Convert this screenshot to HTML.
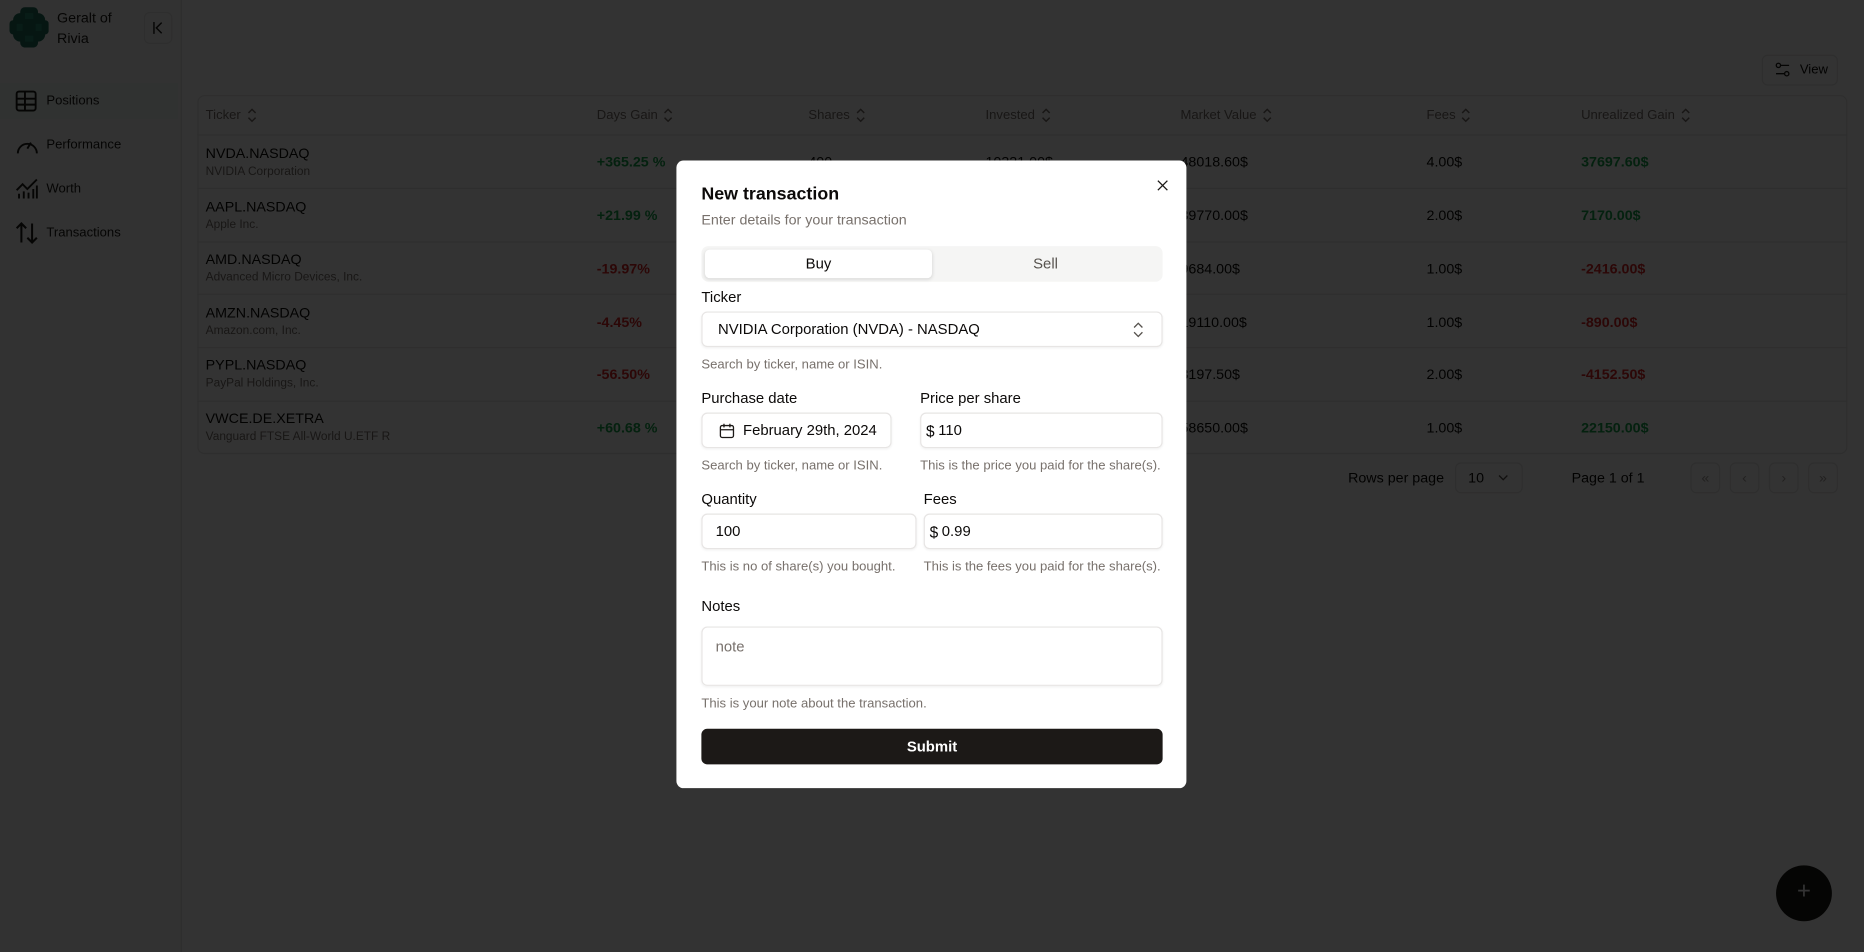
<!DOCTYPE html>
<html><head><meta charset="utf-8"><style>
*{box-sizing:border-box;margin:0;padding:0}
html,body{width:1864px;height:952px;overflow:hidden;background:#fff;font-family:"Liberation Sans",sans-serif}
#root{position:absolute;left:0;top:0;width:1568px;height:801px;transform:scale(1.18878);transform-origin:0 0;background:#fff;color:#0c0a09}
.abs{position:absolute}
.side{left:0;top:0;width:153px;height:801px;border-right:1px solid #e7e5e4;background:#fafaf9}
.nav{position:absolute;left:0;width:150px;height:30px;display:flex;align-items:center;font-size:11px;color:#1c1917}
.nav svg{position:absolute;left:13px}
.nav span{position:absolute;left:39px;top:9px}
.tbl{left:166px;top:80px;width:1388px;height:302px;border:1px solid #e7e5e4;border-radius:6px}
.th{position:absolute;top:91px;font-size:11px;color:#78716c}
.th svg{vertical-align:middle;margin-left:5px}
.row{position:absolute;left:166px;width:1388px;height:45px;border-top:1px solid #e7e5e4}
.c{position:absolute;font-size:12px;line-height:14px}
.sub{font-size:10px;color:#78716c;margin-top:2px}
.g{color:#16a34a;font-weight:bold}
.r{color:#dc2626;font-weight:bold}
.ov{left:0;top:0;width:1568px;height:801px;background:rgba(0,0,0,.8)}
.modal{left:569px;top:135px;width:429px;height:528px;background:#fff;border-radius:6px}
.lbl{position:absolute;font-size:12.5px;font-weight:500;color:#0c0a09}
.help{position:absolute;font-size:11px;color:#78716c}
.inp{position:absolute;height:30px;border:1px solid #e7e5e4;border-radius:5px;font-size:12.5px;display:flex;align-items:center;box-shadow:0 1px 2px rgba(0,0,0,.05)}
.pb{position:absolute;top:389px;width:25px;height:26px;border:1px solid #e7e5e4;border-radius:5px;font-size:12px;color:#a8a29e;text-align:center;line-height:24px}
</style></head><body><div id="root">
<div class="abs side"></div>
<svg class="abs" style="left:8px;top:6px" width="33" height="34" viewBox="0 0 33 34"><g fill="#1f6f5c"><rect x="9" y="0" width="15" height="34" rx="4"/><rect x="3" y="5" width="27" height="24" rx="6"/><rect x="0" y="11" width="33" height="12" rx="3"/></g><g fill="#2a8a73"><rect x="13" y="5" width="7" height="5"/><rect x="6" y="14" width="5" height="6"/><rect x="22" y="14" width="5" height="6"/><rect x="13" y="24" width="7" height="5"/></g></svg>
<div class="abs" style="left:48px;top:7px;font-size:12px;line-height:17px;color:#1c1917">Geralt of<br>Rivia</div>
<div class="abs" style="left:121px;top:10px;width:24px;height:27px;border:1px solid #e7e5e4;border-radius:5px"></div>
<svg class="abs" style="left:128px;top:18px" width="10" height="11" viewBox="0 0 10 11" fill="none" stroke="#1c1917" stroke-width="1.2"><path d="M1.5 0.5v10M8 1L3.5 5.5 8 10"/></svg>
<div class="nav" style="top:70px;background:#f0f7f3"><svg width="18" height="18" viewBox="0 0 18 18" fill="none" stroke="#1c1917" stroke-width="1.6"><rect x="1" y="1" width="16" height="16" rx="2"/><path d="M1 7h16M1 12h16M8 1v16"/></svg><span>Positions</span></div>
<div class="nav" style="top:107px"><svg width="20" height="18" viewBox="0 0 20 18" fill="none" stroke="#1c1917" stroke-width="1.6"><path d="M2 16A8 8 0 1 1 18 16"/><path d="M10 12l3-5"/></svg><span>Performance</span></div>
<div class="nav" style="top:144px"><svg width="20" height="18" viewBox="0 0 20 18" fill="none" stroke="#1c1917" stroke-width="1.6"><path d="M1 10l5-5 4 4 8-8"/><path d="M3 17v-4M7 17v-6M11 17v-5M15 17v-8M18 17v-11"/></svg><span>Worth</span></div>
<div class="nav" style="top:181px"><svg width="20" height="20" viewBox="0 0 20 20" fill="none" stroke="#1c1917" stroke-width="1.7"><path d="M5 18V2M1 6l4-4 4 4M14 2v16M10 14l4 4 4-4"/></svg><span>Transactions</span></div>
<div class="abs" style="left:1482px;top:46px;width:64px;height:26px;border:1px solid #e7e5e4;border-radius:5px;font-size:11px;line-height:24px;padding-left:31px">View</div>
<svg class="abs" style="left:1493px;top:52px" width="13" height="13" viewBox="0 0 13 13" fill="none" stroke="#1c1917" stroke-width="1.1"><circle cx="3" cy="3" r="1.8"/><path d="M5 3h7"/><circle cx="10" cy="10" r="1.8"/><path d="M1 10h7"/></svg>
<div class="abs tbl"></div>
<div class="th" style="left:173px">Ticker<svg width="8" height="12" viewBox="0 0 8 12" fill="none" stroke="#78716c" stroke-width="1.2"><path d="M1 4l3-3 3 3M1 8l3 3 3-3"/></svg></div>
<div class="th" style="left:502px">Days Gain<svg width="8" height="12" viewBox="0 0 8 12" fill="none" stroke="#78716c" stroke-width="1.2"><path d="M1 4l3-3 3 3M1 8l3 3 3-3"/></svg></div>
<div class="th" style="left:680px">Shares<svg width="8" height="12" viewBox="0 0 8 12" fill="none" stroke="#78716c" stroke-width="1.2"><path d="M1 4l3-3 3 3M1 8l3 3 3-3"/></svg></div>
<div class="th" style="left:829px">Invested<svg width="8" height="12" viewBox="0 0 8 12" fill="none" stroke="#78716c" stroke-width="1.2"><path d="M1 4l3-3 3 3M1 8l3 3 3-3"/></svg></div>
<div class="th" style="left:993px">Market Value<svg width="8" height="12" viewBox="0 0 8 12" fill="none" stroke="#78716c" stroke-width="1.2"><path d="M1 4l3-3 3 3M1 8l3 3 3-3"/></svg></div>
<div class="th" style="left:1200px">Fees<svg width="8" height="12" viewBox="0 0 8 12" fill="none" stroke="#78716c" stroke-width="1.2"><path d="M1 4l3-3 3 3M1 8l3 3 3-3"/></svg></div>
<div class="th" style="left:1330px">Unrealized Gain<svg width="8" height="12" viewBox="0 0 8 12" fill="none" stroke="#78716c" stroke-width="1.2"><path d="M1 4l3-3 3 3M1 8l3 3 3-3"/></svg></div>

<div class="row" style="top:113px"></div><div class="row" style="top:158px"></div><div class="row" style="top:203px"></div><div class="row" style="top:247px"></div><div class="row" style="top:292px"></div><div class="row" style="top:337px"></div>

<div class="c" style="left:173px;top:122px">NVDA.NASDAQ<div class="sub">NVIDIA Corporation</div></div>
<div class="c g" style="left:502px;top:129px">+365.25 %</div><div class="c" style="left:680px;top:129px">400</div><div class="c" style="left:829px;top:129px">10321.00$</div><div class="c" style="left:993px;top:129px">48018.60$</div><div class="c" style="left:1200px;top:129px">4.00$</div><div class="c g" style="left:1330px;top:129px">37697.60$</div>
<div class="c" style="left:173px;top:167px">AAPL.NASDAQ<div class="sub">Apple Inc.</div></div>
<div class="c g" style="left:502px;top:174px">+21.99 %</div><div class="c" style="left:993px;top:174px">39770.00$</div><div class="c" style="left:1200px;top:174px">2.00$</div><div class="c g" style="left:1330px;top:174px">7170.00$</div>
<div class="c" style="left:173px;top:211px">AMD.NASDAQ<div class="sub">Advanced Micro Devices, Inc.</div></div>
<div class="c r" style="left:502px;top:219px">-19.97%</div><div class="c" style="left:993px;top:219px">9684.00$</div><div class="c" style="left:1200px;top:219px">1.00$</div><div class="c r" style="left:1330px;top:219px">-2416.00$</div>
<div class="c" style="left:173px;top:256px">AMZN.NASDAQ<div class="sub">Amazon.com, Inc.</div></div>
<div class="c r" style="left:502px;top:264px">-4.45%</div><div class="c" style="left:993px;top:264px">19110.00$</div><div class="c" style="left:1200px;top:264px">1.00$</div><div class="c r" style="left:1330px;top:264px">-890.00$</div>
<div class="c" style="left:173px;top:300px">PYPL.NASDAQ<div class="sub">PayPal Holdings, Inc.</div></div>
<div class="c r" style="left:502px;top:308px">-56.50%</div><div class="c" style="left:993px;top:308px">3197.50$</div><div class="c" style="left:1200px;top:308px">2.00$</div><div class="c r" style="left:1330px;top:308px">-4152.50$</div>
<div class="c" style="left:173px;top:345px">VWCE.DE.XETRA<div class="sub">Vanguard FTSE All-World U.ETF R</div></div>
<div class="c g" style="left:502px;top:353px">+60.68 %</div><div class="c" style="left:993px;top:353px">58650.00$</div><div class="c" style="left:1200px;top:353px">1.00$</div><div class="c g" style="left:1330px;top:353px">22150.00$</div>

<div class="c" style="left:1134px;top:395px">Rows per page</div>
<div class="abs" style="left:1224px;top:389px;width:57px;height:26px;border:1px solid #e7e5e4;border-radius:5px;font-size:12px;line-height:24px;padding-left:10px">10</div>
<svg class="abs" style="left:1260px;top:399px" width="9" height="6" viewBox="0 0 9 6" fill="none" stroke="#57534e" stroke-width="1.1"><path d="M1 1l3.5 3.5L8 1"/></svg>
<div class="c" style="left:1322px;top:395px">Page 1 of 1</div>
<div class="pb" style="left:1422px">«</div><div class="pb" style="left:1455px">‹</div><div class="pb" style="left:1488px">›</div><div class="pb" style="left:1521px">»</div>
<div class="abs" style="left:1494px;top:728px;width:47px;height:47px;border-radius:50%;background:#1c1917;color:#fff;font-size:20px;text-align:center;line-height:45px">+</div>

<div class="abs ov"></div>

<div class="abs modal">
<svg class="abs" style="left:404px;top:16px" width="10" height="10" viewBox="0 0 10 10" stroke="#1c1917" stroke-width="1.1"><path d="M1 1l8 8M9 1l-8 8"/></svg>
<div class="abs" style="left:21px;top:20px;font-size:15px;font-weight:bold">New transaction</div>
<div class="abs" style="left:21px;top:43px;font-size:12px;color:#78716c">Enter details for your transaction</div>
<div class="abs" style="left:21px;top:72px;width:388px;height:30px;background:#f5f5f4;border-radius:6px"></div>
<div class="abs" style="left:24px;top:75px;width:191px;height:24px;background:#fff;border-radius:4px;box-shadow:0 1px 3px rgba(0,0,0,.12);font-size:12.5px;text-align:center;line-height:24px;font-weight:500">Buy</div>
<div class="abs" style="left:215px;top:75px;width:191px;height:24px;font-size:12.5px;text-align:center;line-height:24px;color:#57534e">Sell</div>
<div class="lbl" style="left:21px;top:108px">Ticker</div>
<div class="inp" style="left:21px;top:127px;width:388px;padding-left:13px;font-weight:500">NVIDIA Corporation (NVDA) - NASDAQ
<svg class="abs" style="left:362px;top:8px" width="9" height="13" viewBox="0 0 9 13" fill="none" stroke="#57534e" stroke-width="1.1"><path d="M1 4.5l3.5-3.5 3.5 3.5M1 8.5l3.5 3.5 3.5-3.5"/></svg></div>
<div class="help" style="left:21px;top:166px">Search by ticker, name or ISIN.</div>
<div class="lbl" style="left:21px;top:193px">Purchase date</div>
<div class="inp" style="left:21px;top:212px;width:160px;padding-left:34px;font-weight:500">February 29th, 2024
<svg class="abs" style="left:14px;top:8px" width="13" height="13" viewBox="0 0 13 13" fill="none" stroke="#1c1917" stroke-width="1.1"><rect x="1" y="2" width="11" height="10" rx="1.5"/><path d="M1 5.5h11M4 0.5v3M9 0.5v3"/></svg></div>
<div class="lbl" style="left:205px;top:193px">Price per share</div>
<div class="inp" style="left:205px;top:212px;width:204px;padding-left:4px"><b style="font-weight:500;font-size:13px;margin-right:3px">$</b>110</div>
<div class="help" style="left:21px;top:251px">Search by ticker, name or ISIN.</div>
<div class="help" style="left:205px;top:251px">This is the price you paid for the share(s).</div>
<div class="lbl" style="left:21px;top:278px">Quantity</div>
<div class="inp" style="left:21px;top:297px;width:181px;padding-left:11px">100</div>
<div class="lbl" style="left:208px;top:278px">Fees</div>
<div class="inp" style="left:208px;top:297px;width:201px;padding-left:4px"><b style="font-weight:500;font-size:13px;margin-right:3px">$</b>0.99</div>
<div class="help" style="left:21px;top:336px">This is no of share(s) you bought.</div>
<div class="help" style="left:208px;top:336px">This is the fees you paid for the share(s).</div>
<div class="lbl" style="left:21px;top:368px">Notes</div>
<div class="inp" style="left:21px;top:392px;width:388px;height:50px;align-items:flex-start;padding:9px 11px;color:#78716c">note</div>
<div class="help" style="left:21px;top:451px">This is your note about the transaction.</div>
<div class="abs" style="left:21px;top:478px;width:388px;height:30px;background:#1c1917;border-radius:5px;color:#fff;font-size:12.5px;font-weight:bold;text-align:center;line-height:30px">Submit</div>
</div>
</div></body></html>
